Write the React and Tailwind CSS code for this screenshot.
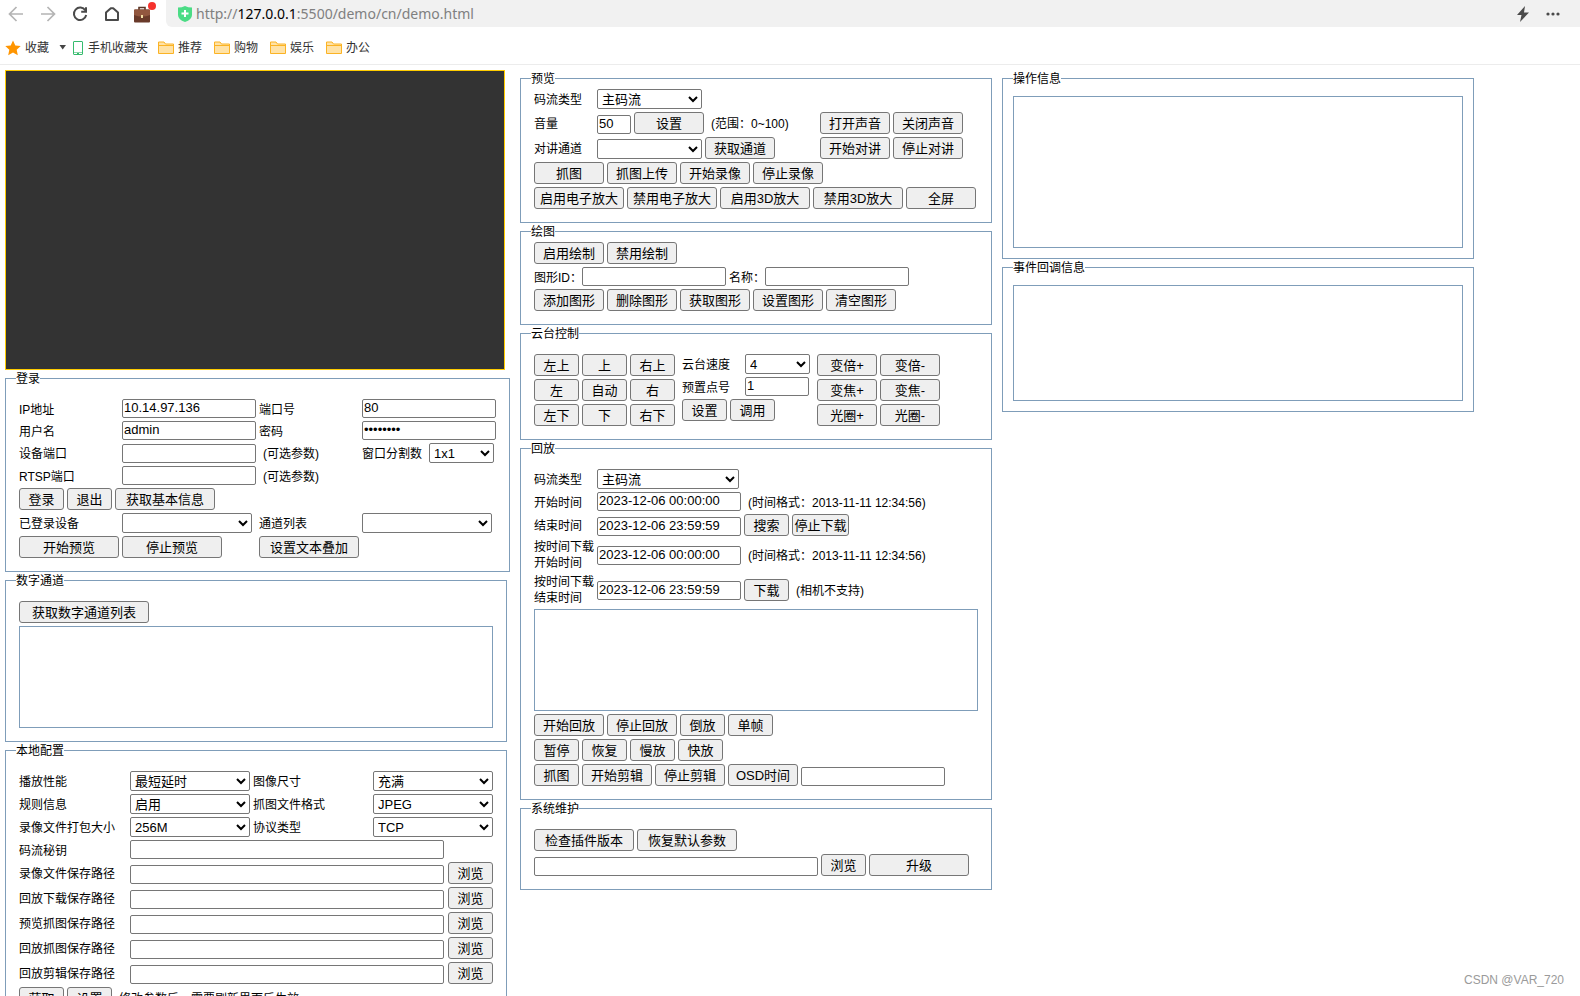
import { useId } from 'react';

const inputBase =
  'h-[19px] border border-[#767676] rounded-xs bg-white px-px pb-0.5 text-[13px] leading-4 text-black';
const selectBase =
  'h-5 border border-[#767676] rounded-xs bg-white text-[13px] leading-4 text-black';
const panelBorder = 'border border-[#7f9db9]';

const Panel = ({ title, compact, className = '', children }) => (
  <fieldset className={`min-w-0 px-[13px] pb-[13px] ${compact ? 'pt-[3px]' : 'pt-[13px]'} ${panelBorder} ${className}`}>
    <legend className="-ml-[3px] pt-0.5 leading-[14px]">{title}</legend>
    <div className="flex flex-col gap-[3px]">{children}</div>
  </fieldset>
);

const MessagePanel = ({ title, boxHeight }) => (
  <fieldset className={`min-w-0 p-2.5 ${panelBorder}`}>
    <legend className="pt-0.5 leading-[14px]">{title}</legend>
    <div className={`${panelBorder} ${boxHeight}`}></div>
  </fieldset>
);

const Row = ({ className = '', children }) => (
  <div className={`flex gap-[3px] ${className}`}>{children}</div>
);

const Button = ({ width = 'w-[45px]', children }) => (
  <button
    type="button"
    className={`h-[22px] shrink-0 whitespace-nowrap rounded-[3px] border border-[#767676] bg-[#efefef] pt-0.5 text-center text-[13px] leading-[18px] text-black ${width}`}
  >
    {children}
  </button>
);

const Field = ({ label, labelWidth, width, type = 'text', value = '' }) => {
  const id = useId();
  return (
    <>
      <label htmlFor={id} className={`shrink-0 self-center pt-0.5 leading-4 ${labelWidth}`}>{label}</label>
      <input id={id} type={type} defaultValue={value} className={`shrink-0 self-end ${inputBase} ${width}`} />
    </>
  );
};

const SelectField = ({ label, labelWidth, width, options = [] }) => {
  const id = useId();
  return (
    <>
      <label htmlFor={id} className={`shrink-0 self-center pt-0.5 leading-4 ${labelWidth}`}>{label}</label>
      <select id={id} className={`shrink-0 self-end ${selectBase} ${width}`}>
        {options.map((option) => (
          <option key={option}>{option}</option>
        ))}
      </select>
    </>
  );
};

const Note = ({ children }) => <span className="self-center pl-1 pt-0.5 leading-4">{children}</span>;

const FolderIcon = () => (
  <svg width="16" height="14" viewBox="0 0 16 14" fill="none">
    <path d="M.5 1h5.500L7.500 3h8v9.500H.5z" fill="#ffe2a6" stroke="#fbb324" />
    <path d="M1 4.500h14" stroke="#fbb324" />
  </svg>
);

const BriefcaseIcon = () => (
  <svg width="24" height="24" viewBox="0 0 24 24">
    <path d="M7 8V5.500h6V8" fill="none" stroke="#5a3425" strokeWidth="1.600" />
    <rect x="2" y="7.500" width="16" height="13" rx="1" fill="#693a2a" />
    <path d="M2 8.500A1 1 0 0 1 3 7.500h14A1 1 0 0 1 18 8.500V13q-8 3-16 0z" fill="#92573f" />
    <rect x="9" y="13" width="2" height="3" fill="#f3dfa4" />
    <circle cx="20" cy="4" r="4" fill="#f5322d" />
  </svg>
);

const BrowserBar = () => (
  <header className="h-[65px] border-b border-[#ececec] font-['Noto_Sans','Noto_Sans_CJK_SC',sans-serif]">
    <div className="flex h-[27px]">
      <div className="flex w-[166px] shrink-0 items-center">
        <button type="button" aria-label="后退" className="ml-2">
          <svg width="16" height="16" viewBox="0 0 16 16" fill="none" stroke="#b4b4b4" strokeWidth="1.700">
            <path d="M15 8H1.500M8.500 1 1.500 8l7 7" />
          </svg>
        </button>
        <button type="button" aria-label="前进" className="ml-4">
          <svg width="16" height="16" viewBox="0 0 16 16" fill="none" stroke="#b4b4b4" strokeWidth="1.700">
            <path d="M1 8h13.500M7.500 1l7 7-7 7" />
          </svg>
        </button>
        <button type="button" aria-label="刷新" className="ml-4">
          <svg width="16" height="16" viewBox="0 0 16 16" fill="none" stroke="#4a4a4a" strokeWidth="2">
            <path d="M13.400 4.500A6.200 6.200 0 1 0 14.200 9" />
            <path d="M14 1.200v4.600H9.200" />
          </svg>
        </button>
        <button type="button" aria-label="主页" className="ml-4">
          <svg width="16" height="16" viewBox="0 0 16 16" fill="none" stroke="#4a4a4a" strokeWidth="2" strokeLinejoin="round">
            <path d="M2 14V6.500L6.800 2.200h2.400L14 6.500V14z" />
          </svg>
        </button>
        <button type="button" aria-label="工具箱" className="ml-3">
          <BriefcaseIcon />
        </button>
      </div>
      <div className="flex min-w-0 grow items-center rounded-bl-md bg-[#f1f1f1] pl-3">
        <svg width="14" height="16" viewBox="0 0 14 16">
          <path d="M0 1.500Q4 1.500 7 0q3 1.500 7 1.500V9q0 4.500-7 7-7-2.500-7-7z" fill="#4bdc85" />
          <path d="M7 4v7M3.500 7.500h7" stroke="#fff" strokeWidth="2" />
        </svg>
        <span className="ml-1 text-[14px] leading-5 text-[#808080]">
          http://<span className="text-black">127.0.0.1</span>:5500/demo/cn/demo.html
        </span>
        <div className="ml-auto flex items-center gap-4 pr-5">
          <svg width="14" height="16" viewBox="0 0 14 16">
            <path d="M9 0 1 9h4.500L4 16l9-9.500H8z" fill="#4a4a4a" />
          </svg>
          <svg width="14" height="4" viewBox="0 0 14 4" fill="#4a4a4a">
            <circle cx="2" cy="2" r="1.600" />
            <circle cx="7" cy="2" r="1.600" />
            <circle cx="12" cy="2" r="1.600" />
          </svg>
        </div>
      </div>
    </div>
    <nav className="flex h-[37px] items-center pl-[5px] pt-1 text-[12px] leading-4 text-[#333]">
      <a href="#fav" className="flex items-center gap-1">
        <svg width="16" height="16" viewBox="0 0 16 16">
          <path d="m8 .5 2.300 5 5.400.6-4 3.700 1.100 5.500L8 12.600l-4.800 2.700 1.100-5.500-4-3.700 5.400-.6z" fill="#ff9500" />
        </svg>
        收藏
        <svg className="ml-1.5" width="8" height="5" viewBox="0 0 8 5">
          <path d="M.5 0h6.500L3.700 4.500z" fill="#444" />
        </svg>
      </a>
      <a href="#mobile" className="ml-1.5 flex items-center gap-1 pr-2.5">
        <svg width="11" height="14" viewBox="0 0 11 14" fill="none" stroke="#35bb6d">
          <rect x=".5" y=".5" width="9" height="13" rx=".5" />
          <path d="M.5 11.500h9" strokeWidth=".6" />
          <path d="M4 12.500h2" />
        </svg>
        手机收藏夹
      </a>
      {['推荐', '购物', '娱乐', '办公'].map((name) => (
        <a key={name} href="#folder" className="flex items-center gap-1 pr-3">
          <FolderIcon />
          {name}
        </a>
      ))}
    </nav>
  </header>
);

const LoginPanel = () => (
  <Panel title="登录" className="w-[505px]">
    <Row>
      <Field label="IP地址" labelWidth="w-[100px]" width="w-[134px]" value="10.14.97.136" />
      <Field label="端口号" labelWidth="w-[100px]" width="w-[134px]" value="80" />
    </Row>
    <Row>
      <Field label="用户名" labelWidth="w-[100px]" width="w-[134px]" value="admin" />
      <Field label="密码" labelWidth="w-[100px]" width="w-[134px]" type="password" value="password" />
    </Row>
    <Row>
      <Field label="设备端口" labelWidth="w-[100px]" width="w-[134px]" />
      <span className="w-[100px] self-center pl-1 pt-0.5 leading-4">(可选参数)</span>
      <SelectField label="窗口分割数" labelWidth="w-16" width="w-[65px]" options={['1x1']} />
    </Row>
    <Row>
      <Field label="RTSP端口" labelWidth="w-[100px]" width="w-[134px]" />
      <Note>(可选参数)</Note>
    </Row>
    <Row>
      <Button>登录</Button>
      <Button>退出</Button>
      <Button width="w-[100px]">获取基本信息</Button>
    </Row>
    <Row>
      <SelectField label="已登录设备" labelWidth="w-[100px]" width="w-[130px] mr-1" />
      <SelectField label="通道列表" labelWidth="w-[100px]" width="w-[130px]" />
    </Row>
    <Row>
      <Button width="w-[100px]">开始预览</Button>
      <Button width="w-[100px] mr-[34px]">停止预览</Button>
      <Button width="w-[100px]">设置文本叠加</Button>
    </Row>
  </Panel>
);

const ChannelPanel = () => (
  <Panel title="数字通道" className="w-[502px]">
    <Row>
      <Button width="w-[130px]">获取数字通道列表</Button>
    </Row>
    <div className={`h-[102px] ${panelBorder}`}></div>
  </Panel>
);

const LOCAL_SELECTS = [
  ['播放性能', '最短延时', '图像尺寸', '充满'],
  ['规则信息', '启用', '抓图文件格式', 'JPEG'],
  ['录像文件打包大小', '256M', '协议类型', 'TCP'],
];

const SAVE_PATHS = ['录像文件保存路径', '回放下载保存路径', '预览抓图保存路径', '回放抓图保存路径', '回放剪辑保存路径'];

const LocalConfigPanel = () => (
  <Panel title="本地配置" className="w-[502px]">
    {LOCAL_SELECTS.map(([left, leftValue, right, rightValue]) => (
      <Row key={left}>
        <SelectField label={left} labelWidth="w-[108px]" width="w-[120px]" options={[leftValue]} />
        <SelectField label={right} labelWidth="w-[117px]" width="w-[120px]" options={[rightValue]} />
      </Row>
    ))}
    <Row>
      <Field label="码流秘钥" labelWidth="w-[108px]" width="w-[314px]" />
    </Row>
    {SAVE_PATHS.map((path) => (
      <Row key={path}>
        <Field label={path} labelWidth="w-[108px]" width="w-[314px]" />
        <Button width="ml-auto w-[45px]">浏览</Button>
      </Row>
    ))}
    <Row>
      <Button>获取</Button>
      <Button>设置</Button>
      <Note>修改参数后，需要刷新界面后生效</Note>
    </Row>
  </Panel>
);

const PreviewPanel = () => (
  <Panel title="预览" compact>
    <Row>
      <SelectField label="码流类型" labelWidth="w-[60px]" width="w-[105px]" options={['主码流']} />
    </Row>
    <Row>
      <Row className="w-[283px] shrink-0">
        <Field label="音量" labelWidth="w-[60px]" width="w-[34px]" value="50" />
        <Button width="w-[70px]">设置</Button>
        <Note>(范围：0~100)</Note>
      </Row>
      <Button width="w-[70px]">打开声音</Button>
      <Button width="w-[70px]">关闭声音</Button>
    </Row>
    <Row>
      <Row className="w-[283px] shrink-0">
        <SelectField label="对讲通道" labelWidth="w-[60px]" width="w-[105px]" />
        <Button width="w-[70px]">获取通道</Button>
      </Row>
      <Button width="w-[70px]">开始对讲</Button>
      <Button width="w-[70px]">停止对讲</Button>
    </Row>
    <Row>
      <Button width="w-[70px]">抓图</Button>
      <Button width="w-[70px]">抓图上传</Button>
      <Button width="w-[70px]">开始录像</Button>
      <Button width="w-[70px]">停止录像</Button>
    </Row>
    <Row>
      <Button width="w-[90px]">启用电子放大</Button>
      <Button width="w-[90px]">禁用电子放大</Button>
      <Button width="w-[90px]">启用3D放大</Button>
      <Button width="w-[90px]">禁用3D放大</Button>
      <Button width="w-[70px]">全屏</Button>
    </Row>
  </Panel>
);

const DrawPanel = () => (
  <Panel title="绘图" compact>
    <Row>
      <Button width="w-[70px]">启用绘制</Button>
      <Button width="w-[70px]">禁用绘制</Button>
    </Row>
    <Row>
      <Field label="图形ID：" labelWidth="w-[45px] whitespace-nowrap" width="w-36" />
      <Field label="名称：" labelWidth="w-[33px] whitespace-nowrap" width="w-36" />
    </Row>
    <Row>
      {['添加图形', '删除图形', '获取图形', '设置图形', '清空图形'].map((name) => (
        <Button key={name} width="w-[70px]">{name}</Button>
      ))}
    </Row>
  </Panel>
);

const PtzPanel = () => (
  <Panel title="云台控制">
    <div className="flex gap-[7px]">
      <div className="grid grid-cols-3 gap-[3px]">
        {['左上', '上', '右上', '左', '自动', '右', '左下', '下', '右下'].map((name) => (
          <Button key={name}>{name}</Button>
        ))}
      </div>
      <div className="flex flex-col gap-[3px]">
        <Row>
          <SelectField label="云台速度" labelWidth="w-[60px]" width="w-[65px]" options={['4']} />
        </Row>
        <Row>
          <Field label="预置点号" labelWidth="w-[60px]" width="w-16" value="1" />
        </Row>
        <Row>
          <Button>设置</Button>
          <Button>调用</Button>
        </Row>
      </div>
      <div className="grid grid-cols-2 gap-[3px]">
        {['变倍+', '变倍-', '变焦+', '变焦-', '光圈+', '光圈-'].map((name) => (
          <Button key={name} width="w-[60px]">{name}</Button>
        ))}
      </div>
    </div>
  </Panel>
);

const DownloadTimeField = ({ label, value }) => {
  const id = useId();
  return (
    <>
      <label htmlFor={id} className="w-[60px] shrink-0 whitespace-nowrap leading-4">
        按时间下载
        <br />
        {label}
      </label>
      <input id={id} type="text" defaultValue={value} className={`w-36 ${inputBase}`} />
    </>
  );
};

const PlaybackPanel = () => (
  <Panel title="回放">
    <Row>
      <SelectField label="码流类型" labelWidth="w-[60px]" width="w-[142px]" options={['主码流']} />
    </Row>
    <Row>
      <Field label="开始时间" labelWidth="w-[60px]" width="w-36" value="2023-12-06 00:00:00" />
      <Note>(时间格式：2013-11-11 12:34:56)</Note>
    </Row>
    <Row>
      <Field label="结束时间" labelWidth="w-[60px]" width="w-36" value="2023-12-06 23:59:59" />
      <Button>搜索</Button>
      <Button width="w-[57px]">停止下载</Button>
    </Row>
    <Row className="items-center">
      <DownloadTimeField label="开始时间" value="2023-12-06 00:00:00" />
      <Note>(时间格式：2013-11-11 12:34:56)</Note>
    </Row>
    <Row className="items-center">
      <DownloadTimeField label="结束时间" value="2023-12-06 23:59:59" />
      <Button>下载</Button>
      <Note>(相机不支持)</Note>
    </Row>
    <div className={`h-[102px] ${panelBorder}`}></div>
    <Row>
      <Button width="w-[70px]">开始回放</Button>
      <Button width="w-[70px]">停止回放</Button>
      <Button>倒放</Button>
      <Button>单帧</Button>
    </Row>
    <Row>
      <Button>暂停</Button>
      <Button>恢复</Button>
      <Button>慢放</Button>
      <Button>快放</Button>
    </Row>
    <Row>
      <Button>抓图</Button>
      <Button width="w-[70px]">开始剪辑</Button>
      <Button width="w-[70px]">停止剪辑</Button>
      <Button width="w-[70px]">OSD时间</Button>
      <input type="text" aria-label="OSD时间" className={`w-36 self-end ${inputBase}`} />
    </Row>
  </Panel>
);

const MaintenancePanel = () => (
  <Panel title="系统维护">
    <Row>
      <Button width="w-[100px]">检查插件版本</Button>
      <Button width="w-[100px]">恢复默认参数</Button>
    </Row>
    <Row>
      <input type="text" aria-label="升级文件" className={`w-[284px] self-end ${inputBase}`} />
      <Button>浏览</Button>
      <Button width="w-[100px]">升级</Button>
    </Row>
  </Panel>
);

const App = () => {
  return (
    <div className="relative h-screen overflow-hidden bg-white font-['Liberation_Sans','Noto_Sans_CJK_SC',sans-serif] text-[12px] leading-4 text-black">
      <BrowserBar />
      <main className="flex items-start gap-2.5 pl-[5px] pt-[5px]">
        <div className="flex w-[505px] shrink-0 flex-col">
          <div className="h-[300px] w-[500px] border border-[#ffcc00] bg-[#333]"></div>
          <LoginPanel />
          <ChannelPanel />
          <LocalConfigPanel />
        </div>
        <div className="flex w-[472px] shrink-0 flex-col">
          <PreviewPanel />
          <DrawPanel />
          <PtzPanel />
          <PlaybackPanel />
          <MaintenancePanel />
        </div>
        <div className="flex w-[472px] shrink-0 flex-col">
          <MessagePanel title="操作信息" boxHeight="h-[152px]" />
          <MessagePanel title="事件回调信息" boxHeight="h-[116px]" />
        </div>
      </main>
      <span className="absolute bottom-2 right-4 text-[12px] leading-4 text-[#9a9a9a]">CSDN @VAR_720</span>
    </div>
  );
};

export default App;
